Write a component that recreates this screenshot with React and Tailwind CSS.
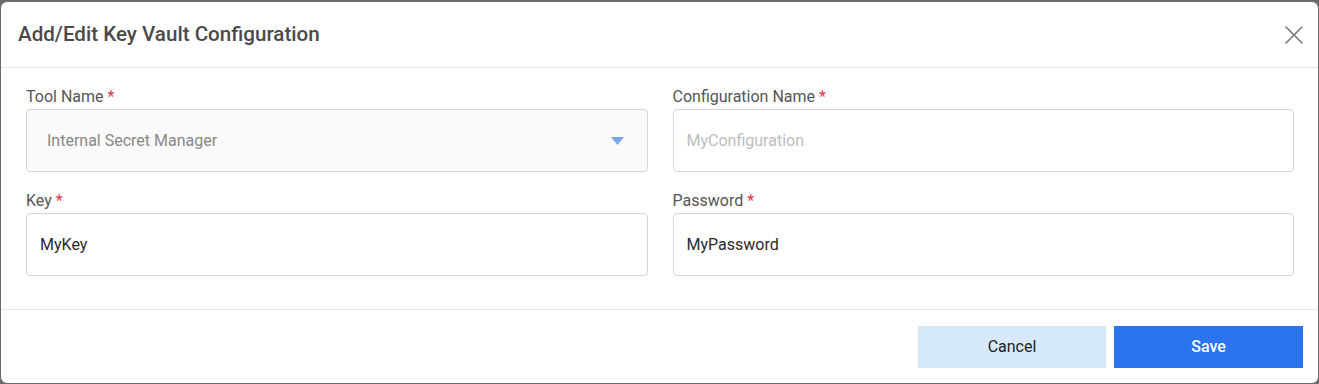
import React from 'react';

const LABEL = 'block text-[16px] leading-5 text-[#555555] mb-[2px]';
const BOX = 'w-full h-[63px] rounded-[4px] border border-[#d5d5d8] flex items-center text-[16px]';

function Label({ children }) {
  return (
    <label className={LABEL}>
      {children} <span className="text-[#e8334a]">*</span>
    </label>
  );
}

export default function App() {
  return (
    <div className="h-[384px] w-full bg-[#6b6b6b] pt-[2px] px-px pb-px font-['Roboto',sans-serif]">
      <div className="h-full bg-white rounded-md flex flex-col overflow-hidden">
        {/* header */}
        <div className="h-[66px] flex items-center justify-between pl-[17px] pr-[15px] border-b border-[#e6e6e6]">
          <h2 className="text-[20.6px] font-medium text-[#4a4a4a]">Add/Edit Key Vault Configuration</h2>
          <button className="text-[#777777]">
            <svg width="18" height="18" viewBox="0 0 18 18" stroke="currentColor" strokeWidth="1.6" strokeLinecap="round">
              <path d="M1 1 L17 17 M17 1 L1 17" />
            </svg>
          </button>
        </div>

        {/* body */}
        <div className="grid grid-cols-2 gap-x-[25px] gap-y-[19px] pl-[25px] pr-[24px] pt-[19px] pb-[33px] border-b border-[#e6e6e6]">
          <div>
            <Label>Tool Name</Label>
            <div className={`${BOX} bg-[#fafafa] pl-5 pr-[23px] justify-between text-[#888888]`}>
              <span>Internal Secret Manager</span>
              <svg width="13" height="8" viewBox="0 0 13 8">
                <path d="M0 0 H13 L6.5 8 Z" fill="#7aa5ea" />
              </svg>
            </div>
          </div>
          <div>
            <Label>Configuration Name</Label>
            <div className={`${BOX} bg-white px-[13px] text-[#bdbdbd]`}>MyConfiguration</div>
          </div>
          <div>
            <Label>Key</Label>
            <div className={`${BOX} bg-white px-[13px] text-[#2a2a2a]`}>MyKey</div>
          </div>
          <div>
            <Label>Password</Label>
            <div className={`${BOX} bg-white px-[13px] text-[#2a2a2a]`}>MyPassword</div>
          </div>
        </div>

        {/* footer */}
        <div className="flex justify-end gap-2 pt-4 pr-[15px]">
          <button className="w-[188px] h-[42px] bg-[#d6e9fb] text-[16px] text-[#222222]">Cancel</button>
          <button className="w-[189px] h-[42px] bg-[#2a74ef] text-[16px] font-medium text-white">Save</button>
        </div>
      </div>
    </div>
  );
}
